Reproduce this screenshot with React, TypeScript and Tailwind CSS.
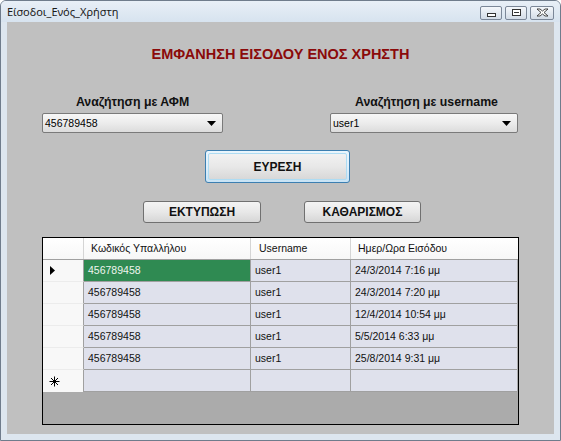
import React from "react";

const rows = [
  { id: "456789458", user: "user1", date: "24/3/2014 7:16 μμ" },
  { id: "456789458", user: "user1", date: "24/3/2014 7:20 μμ" },
  { id: "456789458", user: "user1", date: "12/4/2014 10:54 μμ" },
  { id: "456789458", user: "user1", date: "5/5/2014 6:33 μμ" },
  { id: "456789458", user: "user1", date: "25/8/2014 9:31 μμ" },
];

function Combo({ value, width }: { value: string; width: string }) {
  return (
    <div
      className={`${width} h-[20px] flex items-center justify-between rounded-[2px] border border-[#7a7a7a] bg-gradient-to-b from-[#f7f7f7] via-[#ececec] to-[#dcdcdc] pl-[2px] pr-[6px]`}
    >
      <span className="text-[10.5px] leading-[14px] text-black">{value}</span>
      <svg width="9" height="5" viewBox="0 0 9 5">
        <polygon points="0,0 9,0 4.5,5" fill="#000" />
      </svg>
    </div>
  );
}

function Btn({ label, className }: { label: string; className: string }) {
  return (
    <div
      className={`flex items-center justify-center rounded-[3px] border border-[#707070] bg-gradient-to-b from-[#f4f4f4] via-[#e8e8e8] to-[#d6d6d6] text-[12px] font-bold text-[#111] ${className}`}
    >
      {label}
    </div>
  );
}

export default function App() {
  return (
    <div
      className="w-[561px] h-[441px] bg-[#dde6ef] border border-[#6f7c8c] rounded-t-[6px] flex flex-col overflow-hidden"
      style={{ fontFamily: '"Liberation Sans", Arial, sans-serif' }}
    >
      {/* title bar */}
      <div className="h-[21px] flex items-center justify-between pl-[6px] pr-[6px] bg-gradient-to-b from-[#e8eff7] to-[#d7e3ef]">
        <span className="text-[11px] text-[#1a1a1a] pt-[2px]" style={{ fontFamily: '"Noto Sans", "Liberation Sans", sans-serif' }}>
          Είσοδοι_Ενός_Χρήστη
        </span>
        <div className="flex items-center gap-[3px] pt-[2px]">
          <div className="w-[22px] h-[14px] rounded-[2px] border border-[#7b8798] bg-gradient-to-b from-[#f4f7fb] to-[#d3dce7] flex items-end justify-center pb-[2px]">
            <div className="w-[9px] h-[4px] border border-[#333] bg-white" />
          </div>
          <div className="w-[22px] h-[14px] rounded-[2px] border border-[#7b8798] bg-gradient-to-b from-[#f4f7fb] to-[#d3dce7] flex items-center justify-center">
            <div className="w-[9px] h-[7px] border border-[#333] bg-white flex items-center justify-center">
              <div className="w-[5px] h-[1px] bg-[#333]" />
            </div>
          </div>
          <div className="w-[24px] h-[14px] rounded-[2px] border border-[#7b8798] bg-gradient-to-b from-[#f4f7fb] to-[#d3dce7] flex items-center justify-center">
            <svg width="13" height="9" viewBox="0 0 13 9">
              <path d="M1 1 L4 1 L6.5 3 L9 1 L12 1 L8 4.5 L12 8 L9 8 L6.5 6 L4 8 L1 8 L5 4.5 Z" fill="#fff" stroke="#333" strokeWidth="0.9" />
            </svg>
          </div>
        </div>
      </div>
      {/* client area */}
      <div className="mx-[6px] h-[412px] bg-[#c0c0c0] flex flex-col">
        <div className="mt-[23px] h-[18px] leading-[18px] text-center text-[14.5px] font-bold text-[#8b0a0a]">
          ΕΜΦΑΝΗΣΗ ΕΙΣΟΔΟΥ ΕΝΟΣ ΧΡΗΣΤΗ
        </div>
        <div className="mt-[32px] flex">
          <div className="ml-[35px] w-[181px] flex flex-col items-center">
            <div className="h-[14px] leading-[14px] text-[12.3px] font-bold text-[#111]">Αναζήτηση με ΑΦΜ</div>
          </div>
          <div className="ml-[107px] w-[193px] flex flex-col items-center">
            <div className="h-[14px] leading-[14px] text-[12.3px] font-bold text-[#111]">Αναζήτηση με username</div>
          </div>
        </div>
        <div className="mt-[4px] flex">
          <div className="ml-[35px]">
            <Combo value="456789458" width="w-[181px]" />
          </div>
          <div className="ml-[107px]">
            <Combo value="user1" width="w-[188px]" />
          </div>
        </div>
        <div className="mt-[17px] flex">
          <div className="ml-[198px] w-[145px] h-[33px] rounded-[3px] border border-[#3c7fb1] bg-gradient-to-b from-[#eaf6fd] via-[#dff0fb] to-[#c8e3f5] p-[2px]">
            <div className="w-full h-full rounded-[2px] border border-[#aedcf3] bg-gradient-to-b from-[#f2f2f2] via-[#e8e8e8] to-[#d8d8d8] flex items-center justify-center text-[12px] font-bold text-[#111]">
              ΕΥΡΕΣΗ
            </div>
          </div>
        </div>
        <div className="mt-[18px] flex">
          <Btn label="ΕΚΤΥΠΩΣΗ" className="ml-[136px] w-[118px] h-[22px]" />
          <Btn label="ΚΑΘΑΡΙΣΜΟΣ" className="ml-[43px] w-[117px] h-[22px]" />
        </div>
        {/* grid */}
        <div className="mt-[14px] ml-[35px] w-[477px] h-[188px] border border-black bg-[#ababab] flex flex-col text-[10.5px] text-[#111]">
          <div className="flex h-[22px] bg-gradient-to-b from-white to-[#f7f7f7] border-b border-[#a0a0a0]">
            <div className="w-[41px] border-r border-[#d5d5d5]" />
            <div className="w-[167px] pl-[7px] flex items-center border-r border-[#d5d5d5]">Κωδικός Υπαλλήλου</div>
            <div className="w-[100px] pl-[8px] flex items-center border-r border-[#d5d5d5]">Username</div>
            <div className="w-[166px] pl-[7px] flex items-center">Ημερ/Ωρα Εισόδου</div>
          </div>
          {rows.map((r, i) => (
            <div key={i} className="flex h-[22px]">
              <div className="w-[41px] bg-[#f8f8f8] border-r border-[#a0a0a0] border-b border-b-[#ececec] flex items-center pl-[7px]">
                {i === 0 && (
                  <svg width="5" height="9" viewBox="0 0 5 9">
                    <polygon points="0,0 5,4.5 0,9" fill="#000" />
                  </svg>
                )}
              </div>
              <div
                className={`w-[167px] pl-[4px] flex items-center border-r border-b border-[#a0a0a0] ${
                  i === 0 ? "bg-[#2f8a52] text-[#eef5ee]" : "bg-[#dfe1ec]"
                }`}
              >
                {r.id}
              </div>
              <div className="w-[100px] pl-[4px] flex items-center border-r border-b border-[#a0a0a0] bg-[#dfe1ec]">{r.user}</div>
              <div className="w-[166px] pl-[4px] flex items-center border-b border-[#a0a0a0] bg-[#dfe1ec]">{r.date}</div>
            </div>
          ))}
          <div className="flex h-[22px]">
            <div className="w-[41px] bg-[#f8f8f8] border-r border-[#a0a0a0] flex items-center pl-[6px] leading-none">
              <svg width="11" height="11" viewBox="0 0 11 11">
                <g stroke="#000" strokeWidth="1">
                  <line x1="5.5" y1="0.5" x2="5.5" y2="10.5" />
                  <line x1="0.5" y1="5.5" x2="10.5" y2="5.5" />
                  <line x1="2" y1="2" x2="9" y2="9" />
                  <line x1="9" y1="2" x2="2" y2="9" />
                </g>
              </svg>
            </div>
            <div className="w-[167px] border-r border-b border-[#a0a0a0] bg-[#dfe1ec]" />
            <div className="w-[100px] border-r border-b border-[#a0a0a0] bg-[#dfe1ec]" />
            <div className="w-[166px] border-b border-[#a0a0a0] bg-[#dfe1ec]" />
          </div>
        </div>
      </div>
    </div>
  );
}
